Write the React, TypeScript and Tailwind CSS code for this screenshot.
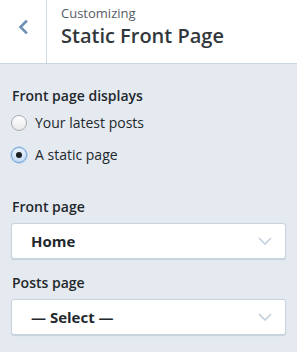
const font = { fontFamily: '"Open Sans", "Liberation Sans", sans-serif' };

const Radio = ({ checked, label }: { checked?: boolean; label: string }) => (
  <label className="flex h-[32px] items-center gap-[8px]">
    {checked ? (
      <span className="flex size-[16px] items-center justify-center rounded-full border border-[#6f9fd8] bg-gradient-to-b from-[#eaf3fd] to-[#c6dcf5] shadow-[0_0_0_1px_rgba(120,170,230,0.35)]">
        <span className="size-[6px] rounded-full bg-[#1d1f22]" />
      </span>
    ) : (
      <span className="size-[16px] rounded-full border border-[#a9adb1] bg-gradient-to-b from-[#ffffff] to-[#e9e9e9]" />
    )}
    <span className="text-[14px] leading-[20px] text-[#23282d]">{label}</span>
  </label>
);

const Select = ({ value }: { value: string }) => (
  <div className="flex h-[36px] w-full items-center justify-between rounded-[3px] border border-[#c8d3de] bg-white pl-[19px] pr-[13px] shadow-[0_1px_1px_rgba(170,185,200,0.5)]">
    <span className="text-[15px] font-bold leading-[20px] text-[#23282d]">{value}</span>
    <svg width="14" height="8" viewBox="0 0 14 8" fill="none">
      <path d="M1 1l6 6 6-6" stroke="#c3cfdb" strokeWidth="1.6" />
    </svg>
  </div>
);

export default function App() {
  return (
    <div className="h-[352px] w-[297px] bg-[#e4eaf0]" style={font}>
      <header className="flex h-[64px] border-b border-[#cbd6e1] bg-white">
        <button className="flex w-[47px] items-center justify-center border-r border-[#cfdbe6] pb-[9px]">
          <svg width="10" height="14" viewBox="0 0 10 14" fill="none">
            <path d="M8 1.5 2.5 7 8 12.5" stroke="#6e90b4" strokeWidth="2.6" strokeLinecap="square" />
          </svg>
        </button>
        <div className="flex flex-col pl-[14px] pt-[4px]">
          <span className="text-[13px] leading-[18px] text-[#555d66]">Customizing</span>
          <span className="text-[20px] font-semibold leading-[28px] text-[#32373c]">Static Front Page</span>
        </div>
      </header>
      <div className="px-[11px] pt-[22px]">
        <div className="px-[1px] text-[14px] font-semibold leading-[20px] text-[#23282d]">Front page displays</div>
        <div className="mt-[1px] flex flex-col">
          <Radio label="Your latest posts" />
          <Radio checked label="A static page" />
        </div>
        <div className="mt-[26px] px-[1px] text-[14px] font-semibold leading-[20px] text-[#23282d]">Front page</div>
        <div className="mt-[6px]">
          <Select value="Home" />
        </div>
        <div className="mt-[14px] px-[1px] text-[14px] font-semibold leading-[20px] text-[#23282d]">Posts page</div>
        <div className="mt-[6px]">
          <Select value="— Select —" />
        </div>
      </div>
    </div>
  );
}
